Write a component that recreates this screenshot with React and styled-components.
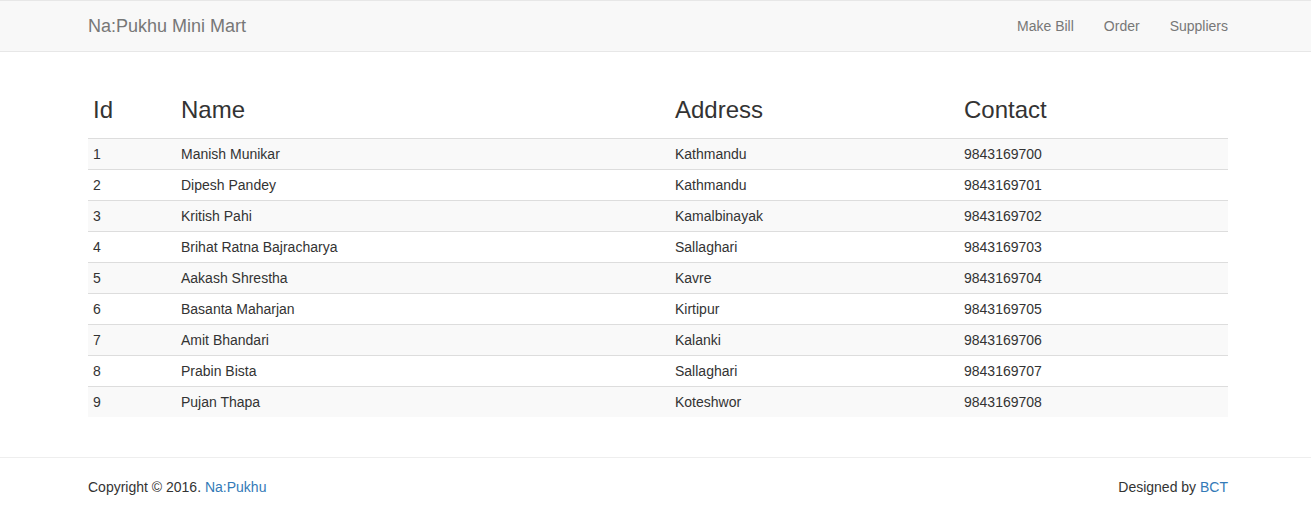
import React from 'react';
import styled, { createGlobalStyle } from 'styled-components';

const GlobalStyle = createGlobalStyle`
  * { box-sizing: border-box; }
  body {
    margin: 0;
    font-family: "Liberation Sans", Arial, Helvetica, sans-serif;
    font-size: 14px;
    line-height: 1.42857;
    color: #333;
    background: #fff;
  }
`;

const Container = styled.div`
  width: 1140px;
  margin-left: 88px;
`;

const Navbar = styled.nav`
  height: 52px;
  background: #f8f8f8;
  border-top: 1px solid #e7e7e7;
  border-bottom: 1px solid #e7e7e7;
  margin-bottom: 19px;
`;

const NavInner = styled(Container)`
  display: flex;
  justify-content: space-between;
  align-items: center;
  height: 50px;
`;

const Brand = styled.a`
  font-size: 18px;
  line-height: 20px;
  color: #777;
  text-decoration: none;
`;

const NavList = styled.ul`
  display: flex;
  list-style: none;
  margin: 0 -15px 0 0;
  padding: 0;
`;

const NavLink = styled.a`
  display: block;
  padding: 15px;
  line-height: 20px;
  color: #777;
  text-decoration: none;
`;

const Table = styled.table`
  width: 100%;
  border-collapse: collapse;
  border-spacing: 0;
  margin-bottom: 20px;
`;

const Th = styled.th`
  text-align: left;
  font-weight: 500;
  padding: 5px;
  border-bottom: 1px solid #ddd;
  width: ${p => p.$w}px;
`;

const HeadTitle = styled.h3`
  margin: 21px 0 10px;
  font-size: 24px;
  font-weight: 500;
  line-height: 1.1;
`;

const Row = styled.tr`
  background: ${p => (p.$odd ? '#f9f9f9' : '#fff')};
`;

const Td = styled.td`
  padding: 5px;
  line-height: 20px;
  border-top: ${p => (p.$first ? 'none' : '1px solid #ddd')};
`;

const Footer = styled.footer`
  border-top: 1px solid #eee;
  margin-top: 40px;
  padding-top: 20px;
  padding-bottom: 20px;
`;

const FooterInner = styled(Container)`
  display: flex;
  justify-content: space-between;
`;

const Link = styled.a`
  color: #337ab7;
  text-decoration: none;
`;

const columns = [
  { label: 'Id', w: 88 },
  { label: 'Name', w: 494 },
  { label: 'Address', w: 289 },
  { label: 'Contact', w: 269 },
];

const people = [
  [1, 'Manish Munikar', 'Kathmandu', '9843169700'],
  [2, 'Dipesh Pandey', 'Kathmandu', '9843169701'],
  [3, 'Kritish Pahi', 'Kamalbinayak', '9843169702'],
  [4, 'Brihat Ratna Bajracharya', 'Sallaghari', '9843169703'],
  [5, 'Aakash Shrestha', 'Kavre', '9843169704'],
  [6, 'Basanta Maharjan', 'Kirtipur', '9843169705'],
  [7, 'Amit Bhandari', 'Kalanki', '9843169706'],
  [8, 'Prabin Bista', 'Sallaghari', '9843169707'],
  [9, 'Pujan Thapa', 'Koteshwor', '9843169708'],
];

export default function App() {
  return (
    <>
      <GlobalStyle />
      <Navbar>
        <NavInner>
          <Brand href="#">Na:Pukhu Mini Mart</Brand>
          <NavList>
            <li><NavLink href="#">Make Bill</NavLink></li>
            <li><NavLink href="#">Order</NavLink></li>
            <li><NavLink href="#">Suppliers</NavLink></li>
          </NavList>
        </NavInner>
      </Navbar>

      <Container>
        <Table>
          <thead>
            <tr>
              {columns.map(c => (
                <Th key={c.label} $w={c.w}>
                  <HeadTitle>{c.label}</HeadTitle>
                </Th>
              ))}
            </tr>
          </thead>
          <tbody>
            {people.map((p, i) => (
              <Row key={p[0]} $odd={i % 2 === 0}>
                {p.map((v, j) => (
                  <Td key={j} $first={i === 0}>{v}</Td>
                ))}
              </Row>
            ))}
          </tbody>
        </Table>
      </Container>

      <Footer>
        <FooterInner>
          <span>Copyright © 2016. <Link href="#">Na:Pukhu</Link></span>
          <span>Designed by <Link href="#">BCT</Link></span>
        </FooterInner>
      </Footer>
    </>
  );
}
